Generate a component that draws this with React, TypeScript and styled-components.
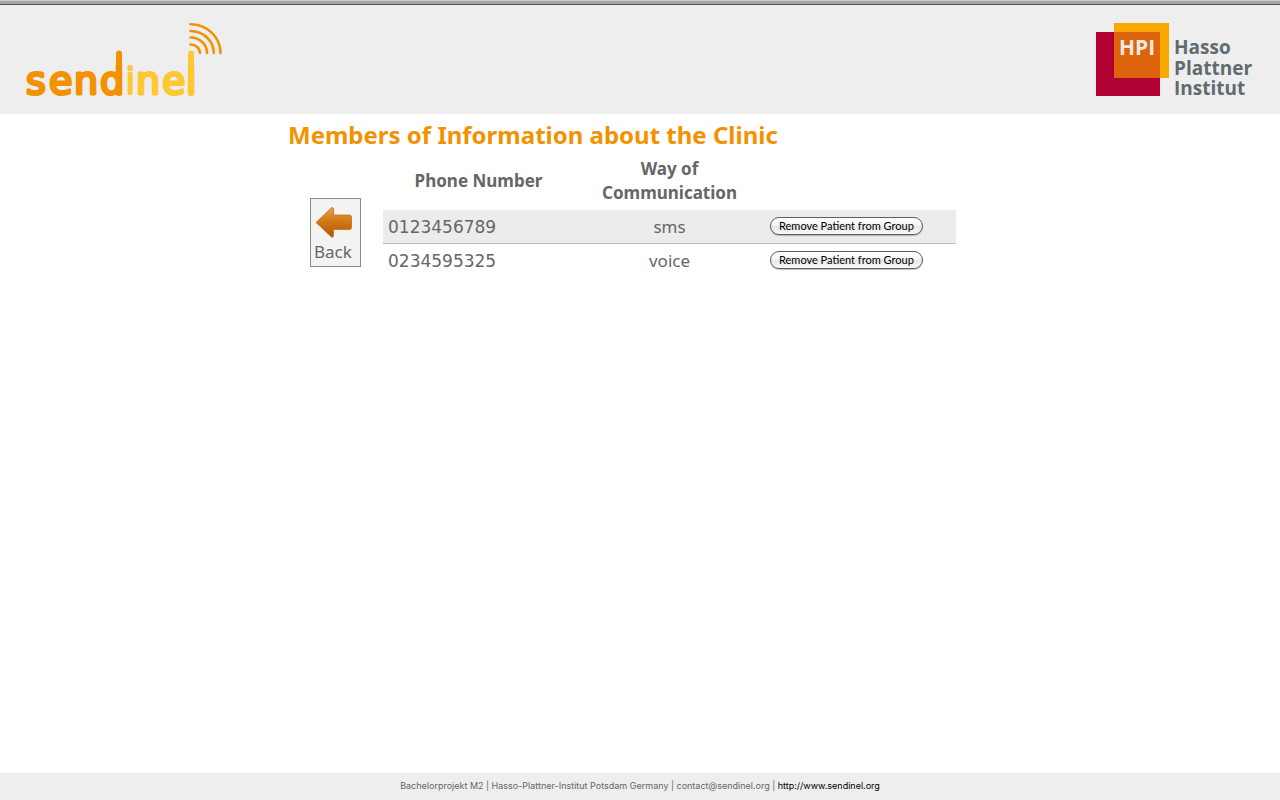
import React from "react";
import styled, { createGlobalStyle } from "styled-components";

const GlobalStyle = createGlobalStyle`
  *, *::before, *::after { box-sizing: border-box; }
  body {
    margin: 0;
    background: #fff;
    color: #666;
    font-family: "Lucida Grande", "Noto Sans", sans-serif;
    font-size: 17px;
    line-height: 24px;
  }
`;

const Page = styled.div`
  display: flex;
  flex-direction: column;
  min-height: 100vh;
`;

const TopStrip = styled.div`
  height: 5px;
  background: #a5a5a5;
  border-top: 1px solid #cfcfcf;
  border-bottom: 1px solid #555;
`;

const Header = styled.header`
  display: flex;
  justify-content: space-between;
  align-items: flex-start;
  padding: 15px 25px 0 24px;
  background: #eee;
`;

const Logo = styled.svg`
  display: block;
`;

const WordMark = styled.text`
  font-family: "DejaVu Sans", sans-serif;
  font-size: 38px;
  stroke-width: 3px;
  stroke-linejoin: round;
`;

const HpiText = styled.text<{ $size: number }>`
  font-family: "Open Sans", sans-serif;
  font-size: ${(p) => p.$size}px;
  font-weight: 700;
`;

const Main = styled.main`
  flex: 1;
  width: 55%;
  min-width: 640px;
  margin: 0 auto;
`;

const Title = styled.h1`
  margin: 0;
  padding: 5px 0 6px;
  color: #f39200;
  font-size: 24px;
  line-height: 32px;
  font-weight: 700;
  white-space: nowrap;
`;

const Content = styled.div`
  display: flex;
  align-items: flex-start;
  gap: 22px;
  padding: 0 36px 0 22px;
`;

const BackButton = styled.button`
  display: flex;
  flex-direction: column;
  align-items: flex-start;
  margin-top: 41px;
  padding: 7px 8px 2px 3px;
  border: 1px solid #8c8c8c;
  background: #f3f3f3;
  color: #666;
  font-family: inherit;
  font-size: 17px;
  line-height: 24px;
`;

const TableArea = styled.div`
  flex: 1;
`;

const Members = styled.table`
  width: 100%;
  table-layout: fixed;
  border-collapse: separate;
  border-spacing: 0;
`;

const HeadCell = styled.th`
  padding: 0 5px 5px;
  font-weight: 700;
  vertical-align: middle;
`;

const Row = styled.tr<{ $shaded?: boolean }>`
  background: ${(p) => (p.$shaded ? "#ececec" : "transparent")};

  td {
    border-bottom: 1px solid ${(p) => (p.$shaded ? "#bbb" : "transparent")};
  }
`;

const Cell = styled.td<{ $align?: string }>`
  height: 34px;
  padding: 0 5px;
  text-align: ${(p) => p.$align || "left"};
  vertical-align: middle;
`;

const PhoneCell = styled(Cell)`
  font-family: "Lucida Grande", "DejaVu Sans", sans-serif;
`;

const ActionCell = styled(Cell)`
  padding-bottom: 2px;
`;

const RemoveButton = styled.button`
  display: block;
  height: 18px;
  padding: 0 8px 1px;
  border: 1px solid #5e5e5e;
  border-radius: 9px;
  background: linear-gradient(#fff 0%, #f4f4f4 45%, #e6e6e6 55%, #fbfbfb 100%);
  box-shadow: 0 1px 1px rgba(0, 0, 0, 0.25);
  color: #000;
  font-family: "Lucida Grande", Lato, sans-serif;
  font-size: 11px;
  line-height: 15px;
  white-space: nowrap;
`;

const Footer = styled.footer`
  padding: 6px 0 7px;
  background: #eee;
  text-align: center;
  font-family: "Lucida Grande", Inter, sans-serif;
  font-size: 9px;
  line-height: 14px;
`;

const FooterLink = styled.a`
  color: #000;
  text-decoration: none;
`;

const members = [
  { phone: "0123456789", way: "sms" },
  { phone: "0234595325", way: "voice" },
];

const SendinelLogo = () => (
  <Logo width="200" height="94" viewBox="24 20 200 94" role="img" aria-label="sendinel">
    <WordMark x="26 49 74 100" y="94" fill="#f39200" stroke="#f39200">send</WordMark>
    <WordMark x="125 136 162 186" y="94" fill="#ffc832" stroke="#ffc832">
      <tspan strokeWidth="1.5">i</tspan>nel
    </WordMark>
    <g fill="none" strokeLinecap="round">
      <path d="M119 53.5V93" stroke="#f39200" strokeWidth="6" />
      <path d="M191 53.5V93" stroke="#ffc832" strokeWidth="6" />
      <g stroke="#f39200" strokeWidth="2.6">
        <path d="M190.5 44.5A9.5 8.5 0 0 1 200 53" />
        <path d="M190.5 37.5A16.5 15.5 0 0 1 207 53" />
        <path d="M190.5 31A23.3 22 0 0 1 213.8 53" />
        <path d="M190.5 24.2A30 28.8 0 0 1 220.5 53" />
      </g>
    </g>
  </Logo>
);

const HpiLogo = () => (
  <Logo width="160" height="94" viewBox="1095 20 160 94" role="img" aria-label="Hasso Plattner Institut">
    <rect x="1096" y="32" width="64" height="64" fill="#b10034" />
    <rect x="1114" y="23" width="55" height="55" fill="#f9a800" />
    <rect x="1114" y="32" width="46" height="46" fill="#dd640c" />
    <HpiText $size={21} x="1119" y="55" fill="#f3e9e2">HPI</HpiText>
    <HpiText $size={19} x="1174" y="54" fill="#5f6b6e">Hasso</HpiText>
    <HpiText $size={19} x="1174" y="75" fill="#5f6b6e">Plattner</HpiText>
    <HpiText $size={19} x="1174" y="95" fill="#5f6b6e">Institut</HpiText>
  </Logo>
);

const BackArrow = () => (
  <svg width="38" height="34" viewBox="0 0 38 34" aria-hidden="true">
    <defs>
      <linearGradient id="arrowFill" x1="0" y1="0" x2="0" y2="1">
        <stop offset="0" stopColor="#e8a04c" />
        <stop offset="0.45" stopColor="#d27a17" />
        <stop offset="1" stopColor="#b35400" />
      </linearGradient>
    </defs>
    <path
      d="M2 16.500 17.500 1.800Q19.300.8 19.500 3V9H35.500Q37.500 9 37.500 11V21.500Q37.500 23.500 35.500 23.500H19.500V29.500Q19.300 32 17.500 31Z"
      fill="url(#arrowFill)"
      stroke="#c4711c"
      strokeWidth="0.8"
      strokeLinejoin="round"
    />
  </svg>
);

export default function App() {
  return (
    <Page>
      <GlobalStyle />
      <TopStrip />
      <Header>
        <SendinelLogo />
        <HpiLogo />
      </Header>
      <Main>
        <Title>Members of Information about the Clinic</Title>
        <Content>
          <BackButton type="button">
            <BackArrow />
            Back
          </BackButton>
          <TableArea>
            <Members>
              <thead>
                <tr>
                  <HeadCell scope="col">Phone Number</HeadCell>
                  <HeadCell scope="col">Way of Communication</HeadCell>
                  <HeadCell />
                </tr>
              </thead>
              <tbody>
                {members.map((m, i) => (
                  <Row key={m.phone} $shaded={i % 2 === 0}>
                    <PhoneCell>{m.phone}</PhoneCell>
                    <Cell $align="center">{m.way}</Cell>
                    <ActionCell>
                      <RemoveButton type="button">Remove Patient from Group</RemoveButton>
                    </ActionCell>
                  </Row>
                ))}
              </tbody>
            </Members>
          </TableArea>
        </Content>
      </Main>
      <Footer>
        Bachelorprojekt M2 | Hasso-Plattner-Institut Potsdam Germany | contact@sendinel.org |{" "}
        <FooterLink href="http://www.sendinel.org">http://www.sendinel.org</FooterLink>
      </Footer>
    </Page>
  );
}
